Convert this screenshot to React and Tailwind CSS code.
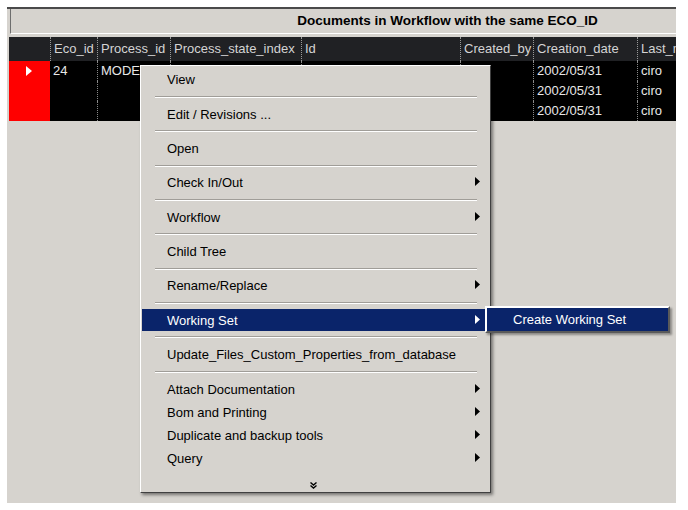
import { Fragment } from 'react'

const columns = [
  { key: 'marker', label: '', width: 41 },
  { key: 'eco', label: 'Eco_id', width: 47 },
  { key: 'process', label: 'Process_id', width: 73 },
  { key: 'state', label: 'Process_state_index', width: 131 },
  { key: 'id', label: 'Id', width: 159 },
  { key: 'created', label: 'Created_by', width: 73 },
  { key: 'date', label: 'Creation_date', width: 104 },
  { key: 'last', label: 'Last_modified_by', width: 100 },
]

const rows = [
  { eco: '24', process: 'MODEL_3', state: '000000', id: 'Plan_in_Tree_Classif_1', created: 'ciro', date: '2002/05/31', last: 'ciro', current: true },
  { eco: '', process: '', state: '', id: '', created: '', date: '2002/05/31', last: 'ciro' },
  { eco: '', process: '', state: '', id: '', created: '', date: '2002/05/31', last: 'ciro' },
]

// menu entries; 'sep' draws an etched divider
const menu = [
  { label: 'View' },
  'sep',
  { label: 'Edit / Revisions ...' },
  'sep',
  { label: 'Open' },
  'sep',
  { label: 'Check In/Out', sub: true },
  'sep',
  { label: 'Workflow', sub: true },
  'sep',
  { label: 'Child Tree' },
  'sep',
  { label: 'Rename/Replace', sub: true },
  'sep',
  { label: 'Working Set', sub: true, active: true },
  'sep',
  { label: 'Update_Files_Custom_Properties_from_database' },
  'sep',
  { label: 'Attach Documentation', sub: true, tall: true },
  { label: 'Bom and Printing', sub: true, tall: true },
  { label: 'Duplicate and backup tools', sub: true, tall: true },
  { label: 'Query', sub: true, tall: true },
]

function Arrow({ color }) {
  return (
    <svg width="5" height="9" viewBox="0 0 5 9" className="mb-[2px]">
      <path d="M0 0 L5 4.5 L0 9 Z" fill={color} />
    </svg>
  )
}

function ContextMenu() {
  return (
    <div className="absolute left-[140px] top-[65px] w-[351px] h-[428px] z-10 bg-[#d6d3ce] border-l border-t border-white border-r border-b border-r-[#404040] border-b-[#404040] shadow-[2px_2px_3px_rgba(0,0,0,0.45)] pl-[1px] pr-[4px] pt-[3px] flex flex-col text-[13px] text-black">
      {menu.map((item, i) => {
        if (item === 'sep') {
          return (
            <div key={i} className="h-[12.33px] shrink-0 ml-[13px] mr-[9px]">
              <div className="mt-[5px] border-t border-[#a09d98] border-b border-b-white" />
            </div>
          )
        }
        return (
          <div
            key={i}
            className={`${item.tall ? 'h-[23px]' : 'h-[22px]'} shrink-0 flex items-center justify-between pl-[25px] pr-[6px] ${item.active ? 'bg-[#0a246a] text-white' : ''}`}
          >
            <span>{item.label}</span>
            {item.sub && <Arrow color={item.active ? '#ffffff' : '#000000'} />}
          </div>
        )
      })}
      <div className="h-[22px] shrink-0 flex items-end justify-center pb-[3px] pr-[2px]">
        <svg width="7" height="7" viewBox="0 0 7 7">
          <path d="M0.5 0.5 L3.5 3 L6.5 0.5 M0.5 3.5 L3.5 6 L6.5 3.5" stroke="#000" strokeWidth="1.4" fill="none" />
        </svg>
      </div>
    </div>
  )
}

function SubMenu() {
  return (
    <div className="absolute left-[485px] top-[306px] w-[185px] h-[27px] z-20 bg-[#0a246a] border-l-2 border-t-2 border-white border-r-2 border-b-2 border-r-[#5a5a5a] border-b-[#5a5a5a] shadow-[2px_2px_2px_rgba(0,0,0,0.35)] flex items-center pl-[26px] text-[13px] text-white">
      Create Working Set
    </div>
  )
}

export default function App() {
  return (
    <div className="relative w-[688px] h-[510px] bg-white overflow-hidden font-['Liberation_Sans',Arial,sans-serif]">
      <div className="absolute left-[7px] top-[7px] w-[669px] h-[496px] bg-[#d6d3ce] border-t-2 border-[#4a4a4a] overflow-hidden">
        {/* title strip */}
        <div className="ml-[3px] w-[874px] h-[25px] border-l border-[#6e6e6e] border-b border-b-white flex items-center justify-center text-[13.5px] font-bold text-black">
          Documents in Workflow with the same ECO_ID
        </div>

        {/* grid */}
        <div className="mt-[3px] ml-[2px] w-[728px]">
          <div className="flex h-[24px] bg-[#202124] text-[13px] text-[#d4d4d4]">
            {columns.map((c, i) => (
              <div
                key={c.key}
                style={{ width: c.width }}
                className={`shrink-0 flex items-center pl-[3px] whitespace-nowrap overflow-hidden ${i > 0 ? 'border-l border-dotted border-[#9a9a9a]' : ''}`}
              >
                {c.label}
              </div>
            ))}
          </div>
          {rows.map((r, ri) => (
            <div key={ri} className="flex h-[20px] bg-black text-[13px] text-[#e8e8e8]">
              {columns.map((c, i) => (
                <Fragment key={c.key}>
                  {c.key === 'marker' ? (
                    <div style={{ width: c.width }} className="shrink-0 bg-[#ff0000] flex items-center justify-center pr-[2px]">
                      {r.current && (
                        <svg width="6" height="10" viewBox="0 0 6 10">
                          <path d="M0 0 L6 5 L0 10 Z" fill="#fff" />
                        </svg>
                      )}
                    </div>
                  ) : (
                    <div
                      style={{ width: c.width }}
                      className={`shrink-0 flex items-center pl-[3px] whitespace-nowrap overflow-hidden ${i > 1 ? 'border-l border-dotted border-[#8a8a8a]' : ''}`}
                    >
                      {r[c.key]}
                      {c.key === 'id' && r.current && <span className="ml-[2px] w-[7px] h-[7px] bg-[#ff40ff] rounded-sm" />}
                    </div>
                  )}
                </Fragment>
              ))}
            </div>
          ))}
        </div>
      </div>

      <ContextMenu />
      <SubMenu />
    </div>
  )
}
